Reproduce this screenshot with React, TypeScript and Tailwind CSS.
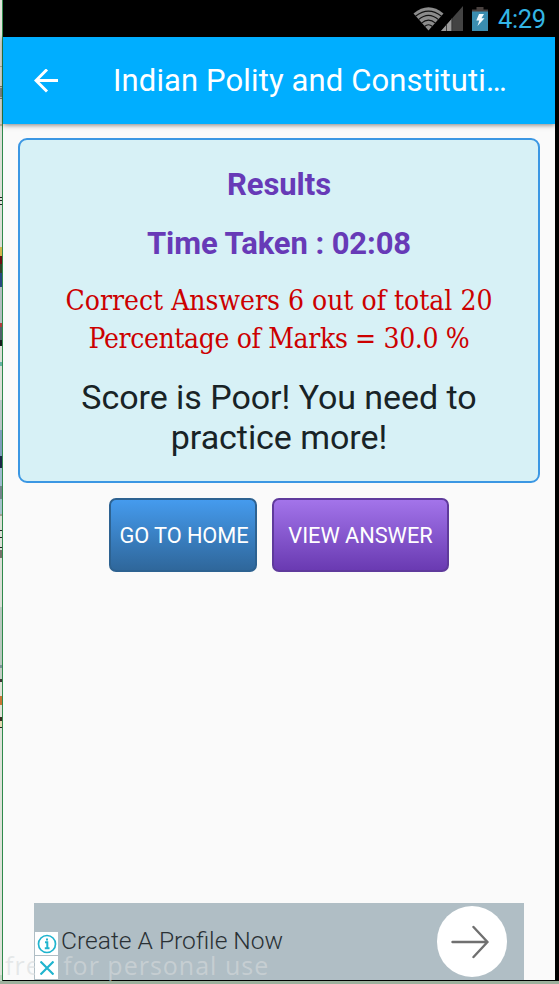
const edgeMarks = [
  { h: 37, c: "bg-[#dfe2da]" },
  { h: 29, c: "bg-[#dcdfd6]" },
  { h: 1, c: "bg-[#a9ada6]" },
  { h: 19, c: "bg-[#dcdfd6]" },
  { h: 1, c: "bg-[#777c78]" },
  { h: 1, c: "bg-[#c8ccc5]" },
  { h: 9, c: "bg-[#858b8c]" },
  { h: 1, c: "bg-[#c8ccc5]" },
  { h: 1, c: "bg-[#777c78]" },
  { h: 25, c: "bg-[#dcdfd6]" },
  { h: 2, c: "bg-[#c9ab96]" },
  { h: 71, c: "bg-[#dddfd8]" },
  { h: 1, c: "bg-[#222222]" },
  { h: 2, c: "bg-[#e0e2dc]" },
  { h: 1, c: "bg-[#222222]" },
  { h: 3, c: "bg-[#e0e2dc]" },
  { h: 1, c: "bg-[#222222]" },
  { h: 42, c: "bg-[#dcdfd8]" },
  { h: 9, c: "bg-[#d2b64d]" },
  { h: 8, c: "bg-[#6d0f10]" },
  { h: 9, c: "bg-[#34422c]" },
  { h: 14, c: "bg-[#28477f]" },
  { h: 36, c: "bg-[#b2bec0]" },
  { h: 4, c: "bg-[#b1393d]" },
  { h: 13, c: "bg-[#50616a]" },
  { h: 6, c: "bg-[#171b1c]" },
  { h: 16, c: "bg-[#dcdfd8]" },
  { h: 4, c: "bg-[#65b3a4]" },
  { h: 34, c: "bg-[#dcdfd8]" },
  { h: 30, c: "bg-[#b9c5c6]" },
  { h: 26, c: "bg-[#7e9dbb]" },
  { h: 12, c: "bg-[#1b2547]" },
  { h: 18, c: "bg-[#9fbbcf]" },
  { h: 13, c: "bg-[#74848c]" },
  { h: 15, c: "bg-[#a6c2cc]" },
  { h: 2, c: "bg-[#a39d94]" },
  { h: 14, c: "bg-[#dde0d8]" },
  { h: 1, c: "bg-[#222222]" },
  { h: 6, c: "bg-[#dde0d8]" },
  { h: 1, c: "bg-[#222222]" },
  { h: 9, c: "bg-[#dde0d8]" },
  { h: 1, c: "bg-[#222222]" },
  { h: 2, c: "bg-[#dde0d8]" },
  { h: 8, c: "bg-[#77706a]" },
  { h: 49, c: "bg-[#dcdfd8]" },
  { h: 58, c: "bg-[#b9c8bf]" },
  { h: 3, c: "bg-[#7e9299]" },
  { h: 11, c: "bg-[#c5cec6]" },
  { h: 3, c: "bg-[#3b3431]" },
  { h: 14, c: "bg-[#e2e3d9]" },
  { h: 9, c: "bg-[#ca7433]" },
  { h: 12, c: "bg-[#e2e3d9]" },
  { h: 4, c: "bg-[#3a2a20]" },
  { h: 6, c: "bg-[#e6d9b2]" },
  { h: 1, c: "bg-[#222222]" },
  { h: 247, c: "bg-[#dfe2da]" },
];

function DesktopEdge() {
  return (
    <div className="w-0.5 shrink-0 overflow-hidden bg-[#c5d3c3]">
      {edgeMarks.map((m, i) => (
        <div key={i} className={m.c} style={{ height: m.h }} />
      ))}
    </div>
  );
}

function StatusBar() {
  return (
    <div className="h-[37px] shrink-0 bg-black flex items-center justify-end pr-[9px]">
      <svg className="w-[31px] h-[25px] shrink-0" viewBox="0 0 31 25" fill="none">
        <path d="M0.5 7.5Q15.5 -5 30.5 7.5L15.5 24.5Z" fill="#8c8c8c" />
        <g stroke="#111" strokeWidth="1.1">
          <path d="M2.5 10.2Q15.5 0 28.5 10.2" />
          <path d="M5.5 13.7Q15.5 5 25.5 13.7" />
          <path d="M8.5 17.2Q15.5 11 22.5 17.2" />
          <path d="M11.5 20.5Q15.5 17 19.5 20.5" />
        </g>
      </svg>
      <svg className="w-[22px] h-[25px] shrink-0 -ml-[3px]" viewBox="0 0 22 25">
        <path d="M22 0V25H0Z" fill="#434343" />
        <path d="M11 12.5V25H0Z" fill="#9a9a9a" />
        <path d="M5.5 18V25M10.8 12V25" stroke="#2a2a2a" strokeWidth="0.8" />
      </svg>
      <svg className="w-4 h-6 ml-[9px] shrink-0" viewBox="0 0 16 24">
        <path d="M4.5 0h7v2.5H16V8H0V2.5h4.5z" fill="#4a4240" />
        <path d="M0 4.5h16V24H0z" fill="#3a8db0" />
        <path d="M7 7h5l-2.5 4.2h3L5.5 19l1.8-5.6H4.3z" fill="#f2fbff" />
      </svg>
      <span className="relative top-px ml-[10px] w-[48px] whitespace-nowrap text-[25.5px] leading-[37px] tracking-[-0.4px] text-[#33b5e5]">4:29</span>
    </div>
  );
}

function AppBar() {
  return (
    <header className="relative z-10 h-[87px] shrink-0 bg-[#00aeff] flex items-center shadow-[0_1px_5px_rgba(0,0,0,0.5)]">
      <svg className="ml-[31px] w-6 h-6 shrink-0" viewBox="0 0 24 24" fill="none" stroke="#fff" strokeWidth="3">
        <path d="M24 11.5H2M13 0.5L2 11.5L13 22.5" />
      </svg>
      <h1 className="ml-[55px] whitespace-nowrap text-[31px] leading-[36px] tracking-[0.12px] text-white">Indian Polity and Constituti…</h1>
    </header>
  );
}

function ResultCard() {
  return (
    <section className="mt-[14px] ml-[15px] w-[522px] h-[345px] shrink-0 rounded-[9px] border-2 border-[#3b97e3] bg-[#d7f1f6] pt-[27px] flex flex-col items-center text-center whitespace-nowrap">
      <h2 className="text-[31px] leading-[36px] tracking-[-0.05px] font-bold text-[#673ab7]">Results</h2>
      <p className="mt-[23px] text-[31px] leading-[36px] tracking-[-0.1px] font-bold text-[#673ab7]">Time Taken : 02:08</p>
      <div className="mt-[20px] text-[28px] leading-[38px] text-[#cc0000] [font-family:'DejaVu_Serif_Condensed','DejaVu_Serif',serif] [font-stretch:condensed]">
        <p>Correct Answers 6 out of total 20</p>
        <p className="tracking-[-0.35px]">Percentage of Marks = 30.0 %</p>
      </div>
      <p className="mt-[19px] text-[34px] leading-[40px] tracking-[-0.05px] text-[#182326]">
        Score is Poor! You need to
        <br />
        practice more!
      </p>
    </section>
  );
}

function AdBanner() {
  return (
    <div className="mt-auto ml-[31px] w-[490px] h-[77px] shrink-0 bg-[#b0bec5] flex">
      <div className="ml-px mt-[29px] w-[23px] flex flex-col gap-px">
        <div className="h-[23px] bg-white flex items-center justify-center">
          <svg className="w-5 h-5" viewBox="0 0 20 20" fill="none" stroke="#20b4ce" strokeWidth="1.7">
            <circle cx="10" cy="10" r="8.5" />
            <path d="M8 8.3h2.3V14M7.8 14.3h4.7" strokeWidth="2" />
            <path d="M9 5.5h2" strokeWidth="2.2" />
          </svg>
        </div>
        <div className="relative z-10 h-[23px] flex items-center justify-center before:absolute before:inset-0 before:bg-white before:-z-10">
          <svg className="w-[14px] h-[14px]" viewBox="0 0 14 14" stroke="#20b4ce" strokeWidth="2.2">
            <path d="M0.5 0.5L13.5 13.5M13.5 0.5L0.5 13.5" />
          </svg>
        </div>
      </div>
      <p className="ml-[3px] mt-[26px] h-6 grow whitespace-nowrap text-[24.6px] leading-6 font-light text-[#2a3135]">Create A Profile Now</p>
      <div className="mt-[3px] mr-[17px] w-[70px] h-[71px] shrink-0 rounded-full bg-white flex items-center justify-center">
        <svg className="w-[38px] h-[34px] -ml-1" viewBox="0 0 38 34" fill="none" stroke="#707070" strokeWidth="2.4" strokeLinecap="round" strokeLinejoin="round">
          <path d="M1.5 17H36.5M22.5 2L36.5 17L22.5 32" />
        </svg>
      </div>
    </div>
  );
}

export default function App() {
  return (
    <div className="relative w-[559px] h-[984px] overflow-hidden bg-[#9db19d] flex flex-col [font-family:Roboto,sans-serif]">
      <div className="h-[981px] shrink-0 flex">
        <DesktopEdge />
        <div className="w-[557px] border-l border-l-[#2f8a4c] border-b border-b-black flex">
          <div className="w-[552px] bg-[#fafafa] flex flex-col">
            <StatusBar />
            <AppBar />
            <ResultCard />
            <div className="mt-[15px] ml-[106px] flex gap-[15px] text-[21.8px] text-white">
              <button className="w-[148px] h-[74px] rounded-[7px] border-2 border-[#2d6291] bg-linear-to-b from-[#459bee] to-[#2f679b] pl-0.5 pt-0.5 whitespace-nowrap tracking-[-0.1px]">GO TO HOME</button>
              <button className="w-[177px] h-[74px] rounded-[7px] border-2 border-[#5f3a9c] bg-linear-to-b from-[#a374ea] to-[#6a3ab2] pt-0.5 whitespace-nowrap tracking-[-0.05px]">VIEW ANSWER</button>
            </div>
            <AdBanner />
          </div>
          <div className="w-1 bg-black" />
        </div>
      </div>
      <span className="absolute left-[5px] bottom-2 whitespace-nowrap text-[25px] leading-[22px] tracking-[1px] text-[#d6dadc]/60 [font-family:'Open_Sans',sans-serif]">free for personal use</span>
    </div>
  );
}
